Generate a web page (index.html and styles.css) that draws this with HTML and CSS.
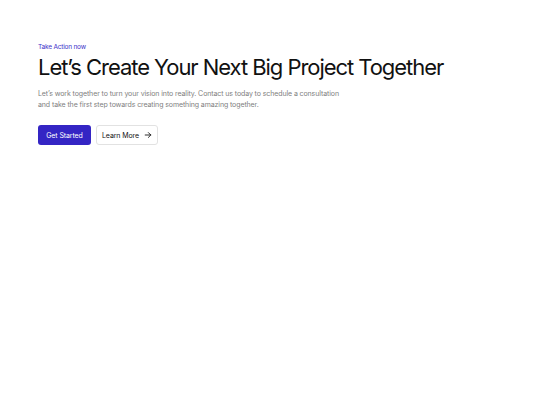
FILE: index.html
```html
<!DOCTYPE html>
<html>
<head>
<meta charset="utf-8">
<link rel="stylesheet" href="styles.css">
</head>
<body>
<section class="cta">
  <p class="eyebrow">Take Action now</p>
  <h1 class="title">Let’s Create Your Next Big Project Together</h1>
  <p class="lead">Let’s work together to turn your vision into reality. Contact us today to schedule a consultation and take the first step towards creating something amazing together.</p>
  <div class="actions">
    <a class="btn btn-primary">Get Started</a>
    <a class="btn btn-outline">Learn More
      <svg class="arrow" viewBox="0 0 10 10" width="8" height="8"><path d="M1.5 5h7M5.5 2l3 3-3 3" fill="none" stroke="currentColor" stroke-width="1.1" stroke-linecap="round" stroke-linejoin="round"/></svg>
    </a>
  </div>
</section>
</body>
</html>
```
FILE: styles.css
```css
html, body { margin: 0; padding: 0; background: #fff; }
body { font-family: Inter, "Noto Sans", sans-serif; color: #111; }
.cta { padding: 42px 38px; }
.eyebrow { margin: 0; font-size: 6.5px; line-height: 10px; color: #3b2fc9; letter-spacing: -0.2px; }
.title { margin: 1px 0 0; font-size: 22px; line-height: 28px; font-weight: 400; letter-spacing: -1.05px; color: #111; }
.lead { margin: 7px 0 0; width: 310px; font-size: 7px; line-height: 11px; color: #808080; letter-spacing: -0.1px; }
.actions { display: flex; gap: 5px; margin-top: 15px; }
.btn { display: inline-flex; align-items: center; justify-content: center; gap: 5px; height: 20px; box-sizing: border-box; border-radius: 3px; font-size: 7px; letter-spacing: -0.1px; white-space: nowrap; }
.btn-primary { background: #3425c4; color: #fff; width: 53px; }
.btn-outline { border: 1px solid #e2e2e2; color: #111; width: 62px; }
.arrow { display: block; }
```
